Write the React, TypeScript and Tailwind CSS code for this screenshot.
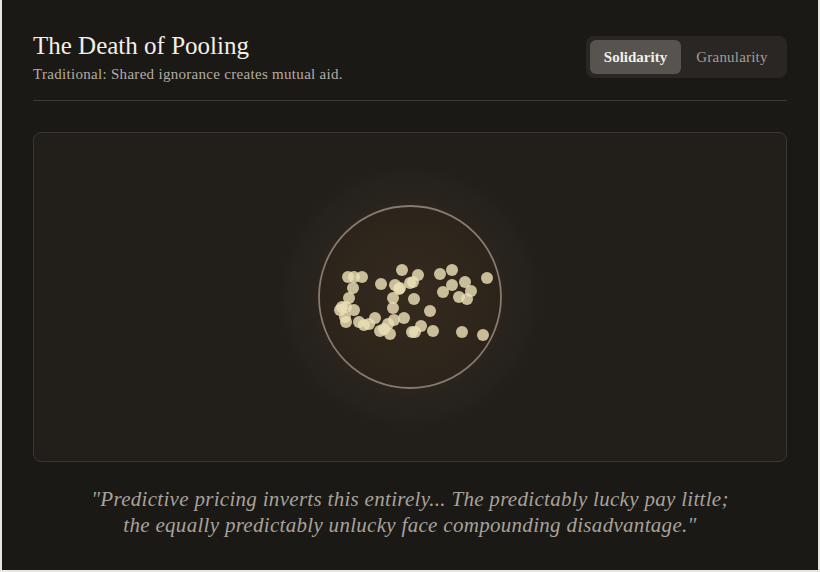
import React from 'react';

const dots: [number, number][] = [
  [348, 277], [354, 277], [362, 277], [353, 288], [349, 298], [342, 307], [346, 307], [354, 310],
  [345, 317], [346, 322], [359, 322], [364, 325], [369, 324], [375, 318], [380, 331], [384, 329],
  [390, 334], [388, 324], [394, 320], [404, 318], [393, 308], [393, 298], [381, 284], [395, 285],
  [400, 288], [402, 270], [418, 275], [413, 282], [414, 299], [430, 311], [421, 326], [412, 332],
  [415, 332], [433, 331], [440, 274], [452, 270], [452, 285], [443, 292], [465, 282], [471, 291],
  [459, 297], [467, 299], [487, 278], [462, 332], [483, 335], [340, 310], [399, 289], [410, 283],
];

const serif = "font-['Liberation_Serif','DejaVu_Serif',serif]";

export default function App() {
  return (
    <div className="w-[820px] h-[572px] bg-[#e8e6e1] overflow-hidden">
      <div className={`ml-[2px] w-[816px] h-[570px] bg-[#1b1916] px-[31px] pt-[30px] ${serif}`}>
        <header className="flex items-center justify-between pb-[16px] border-b border-[#3d3934]">
          <div>
            <h1 className="text-[25px] leading-[32px] text-[#f4efe6]">The Death of Pooling</h1>
            <p className="mt-[2px] text-[15px] leading-[20px] tracking-[0.3px] text-[#b3ada4]">
              Traditional: Shared ignorance creates mutual aid.
            </p>
          </div>
          <div className="flex p-1 rounded-lg bg-[#292623]">
            <button className="w-[91px] h-[34px] rounded-md bg-[#57534e] text-[15px] font-semibold text-[#f4efe6]">
              Solidarity
            </button>
            <button className="w-[102px] h-[34px] rounded-md text-[15px] tracking-[0.2px] text-[#a39d95]">
              Granularity
            </button>
          </div>
        </header>

        <div className="mt-[31px] h-[330px] rounded-lg border border-[#3a3632] bg-[#221f1b] overflow-hidden">
          <svg width="752" height="328" viewBox="34 133 752 328">
            <defs>
              <radialGradient id="halo" cx="410" cy="297" r="140" gradientUnits="userSpaceOnUse">
                <stop offset="0" stopColor="#2e261d" />
                <stop offset="0.64" stopColor="#2c251d" />
                <stop offset="0.72" stopColor="#28231d" />
                <stop offset="0.86" stopColor="#25211c" />
                <stop offset="1" stopColor="#221f1b" stopOpacity="0" />
              </radialGradient>
              <radialGradient id="core" cx="410" cy="297" r="92" gradientUnits="userSpaceOnUse">
                <stop offset="0" stopColor="#352a1e" />
                <stop offset="1" stopColor="#2c241b" />
              </radialGradient>
            </defs>
            <circle cx="410" cy="297" r="140" fill="url(#halo)" />
            <circle cx="410" cy="297" r="91" fill="url(#core)" stroke="#857b71" strokeWidth="1.8" />
            {dots.map(([x, y], i) => (
              <circle key={i} cx={x} cy={y} r="6" fill="#eadfb4" fillOpacity="0.82" />
            ))}
          </svg>
        </div>

        <p className="mt-[24px] text-center italic text-[21px] leading-[26px] tracking-[0.3px] text-[#a8a29a]">
          "Predictive pricing inverts this entirely... The predictably lucky pay little;
          <br />
          the equally predictably unlucky face compounding disadvantage."
        </p>
      </div>
    </div>
  );
}
